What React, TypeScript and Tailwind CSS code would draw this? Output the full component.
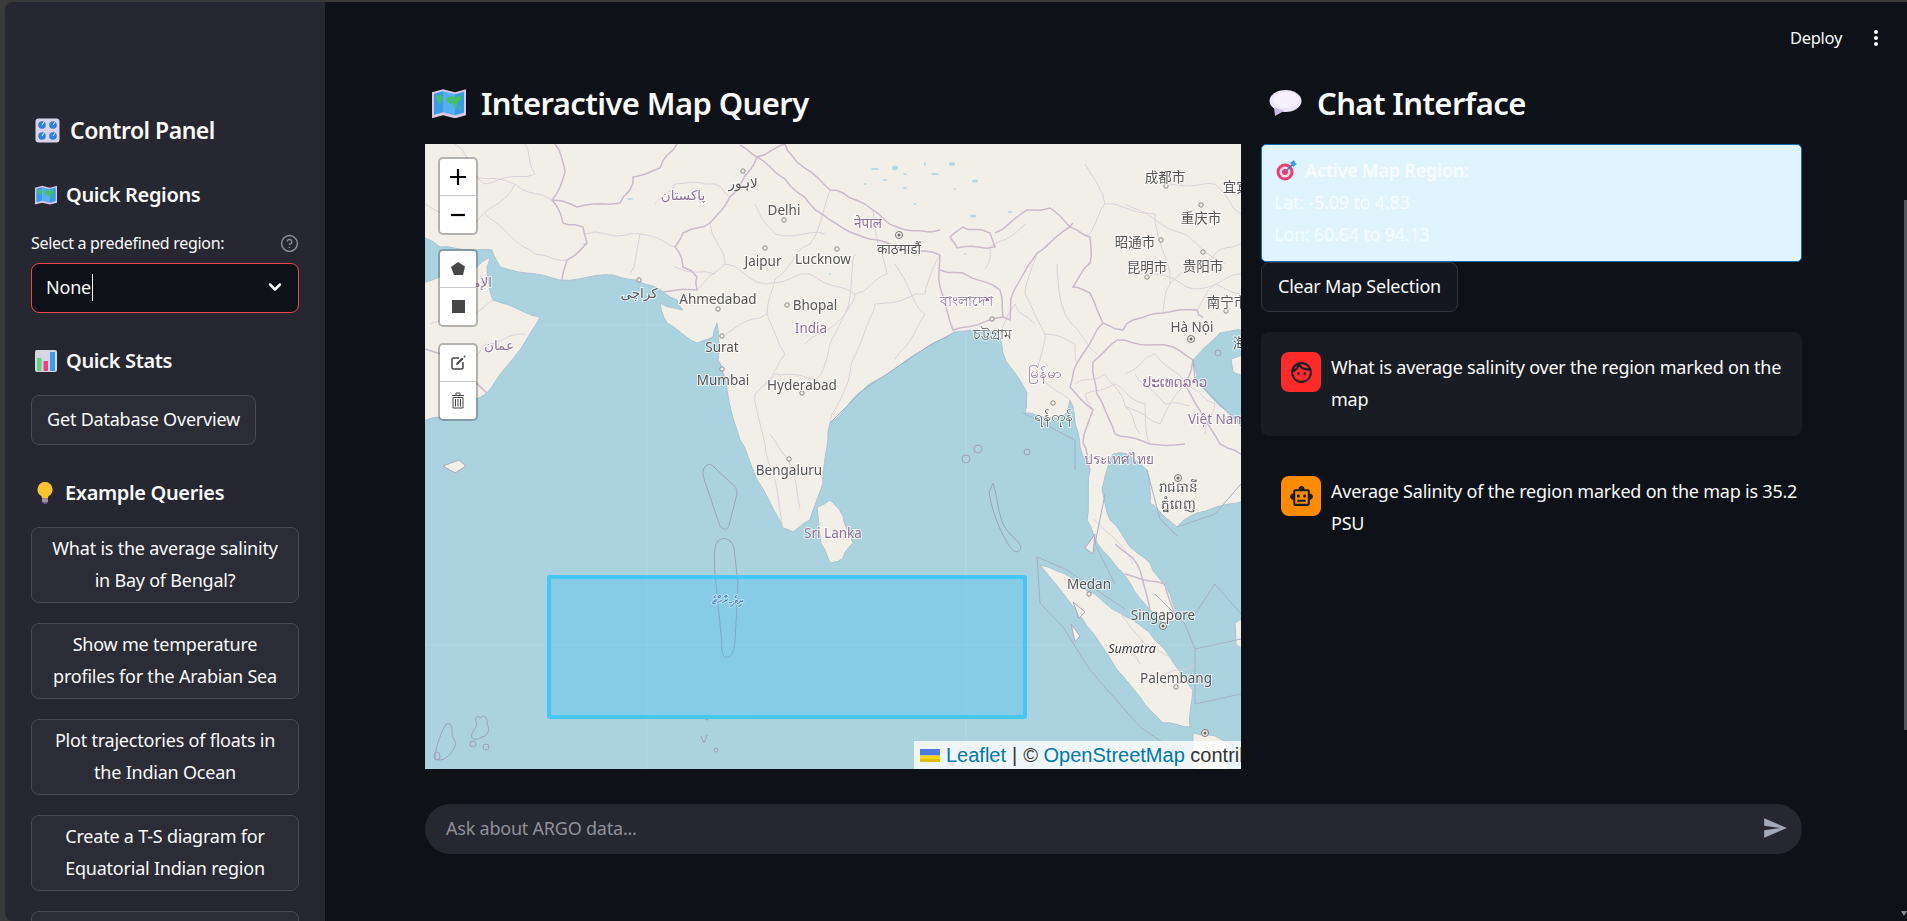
import React from 'react';
import { ChevronDown, CircleHelp } from 'lucide-react';
import { MdMoreVert, MdOutlineFace, MdOutlineSmartToy, MdSend } from 'react-icons/md';

const KnobsEmoji = () => (
  <svg width="25" height="25" viewBox="0 0 25 25">
    <rect x="0.5" y="0.5" width="24" height="24" rx="3" fill="#d9d3ea" />
    {[7, 18].map((cy) =>
      [7, 18].map((cx) => (
        <g key={`${cx}-${cy}`}>
          <circle cx={cx} cy={cy} r="3.800" fill="#2f80d6" />
          <path d={`M${cx} ${cy}l2-3`} stroke="#dff" strokeWidth="1" />
        </g>
      ))
    )}
  </svg>
);

const MapEmoji = ({ size }: { size: number }) => (
  <svg width={size} height={size * 0.9} viewBox="0 0 34 30">
    <path d="M0 4l11-3 12 3 11-3v26l-11 3-12-3-11 3z" fill="#d8c8e4" />
    <path d="M2 5.500l9-2.500v21l-9 2.500z" fill="#3b9ae8" />
    <path d="M11 3l12 3v21l-12-3z" fill="#55aef0" />
    <path d="M23 6l9-2.500v21l-9 2.500z" fill="#3b9ae8" />
    <path d="M4 8l5-2 2 4-3 6-3-4zM14 10l6-2 3 1 5-2 2 3-4 4-2 7-3-6-2 1-4-3zM26 18l3 1-1 3z" fill="#45bf68" />
  </svg>
);

const ChartEmoji = () => (
  <svg width="22" height="22" viewBox="0 0 22 22">
    <rect width="22" height="22" rx="2" fill="#d7d5e2" />
    <rect x="2" y="8" width="4.500" height="13" fill="#63d182" />
    <rect x="8.500" y="11" width="4.500" height="10" fill="#ef3f7f" />
    <rect x="15" y="2" width="5" height="19" fill="#3a9be8" />
  </svg>
);

const BulbEmoji = () => (
  <svg width="16" height="22" viewBox="0 0 16 22">
    <path d="M8 0a7.500 7.500 0 0 0-4 13.800c.8.700 1 1.700 1 2.700h6c0-1 .2-2 1-2.700A7.500 7.500 0 0 0 8 0z" fill="#fbc531" />
    <rect x="5" y="16.500" width="6" height="4" rx="1" fill="#9d90ad" />
    <rect x="6.500" y="20" width="3" height="2" rx="1" fill="#6f6480" />
  </svg>
);

const BubbleEmoji = () => (
  <svg width="33" height="26" viewBox="0 0 33 26">
    <ellipse cx="16.500" cy="11" rx="16" ry="11" fill="#ece4f8" />
    <path d="M5 17l1 9 9-5z" fill="#c9b8e2" />
    <ellipse cx="17" cy="10" rx="13" ry="8" fill="#f6f1fd" />
  </svg>
);

const TargetEmoji = () => (
  <svg width="21" height="21" viewBox="0 0 21 21">
    <circle cx="9" cy="12" r="8.500" fill="#e8406f" />
    <circle cx="9" cy="12" r="5.500" fill="#f3d7e2" />
    <circle cx="9" cy="12" r="3" fill="#e8406f" />
    <path d="M9 12l9-9" stroke="#2f80d6" strokeWidth="1.500" />
    <path d="M14 3l4-3 1 3 2 1-4 3z" fill="#3a9be8" />
  </svg>
);

// break long straight segments into small wobbles so coasts and borders look hand-surveyed
const roughen = (points: string, amp: number) => {
  const pts = points.split(' ').map((p) => p.split(',').map(Number));
  const out: string[] = [];
  pts.forEach(([x, y], i) => {
    out.push(`${x},${y}`);
    const next = pts[i + 1];
    if (!next) return;
    const len = Math.hypot(next[0] - x, next[1] - y);
    const steps = Math.ceil(len / 9);
    for (let s = 1; s < steps; s++) {
      const t = s / steps;
      const wob = Math.sin(s * 12.9898 + x * 0.78 + y * 0.37) * amp;
      const wob2 = Math.cos(s * 7.233 + y * 0.91 + x * 0.21) * amp;
      out.push(`${(x + (next[0] - x) * t + wob).toFixed(1)},${(y + (next[1] - y) * t + wob2).toFixed(1)}`);
    }
  });
  return out.join(' ');
};

const land = [
  '-5,-5 821,-5 821,186 795,189 768,216 772,239 795,262 821,286 821,356 772,369 752,383 725,359 722,326 702,310 688,310 682,326 677,346 685,376 705,403 725,419 745,450 752,476 738,479 725,466 705,439 692,423 672,399 662,376 665,326 655,303 650,279 645,256 638,273 618,273 600,269 602,249 578,209 572,186 530,188 502,203 438,246 405,279 403,296 398,339 385,376 368,388 358,384 332,336 315,296 297,226 293,216 292,179 288,193 272,199 242,179 235,159 258,166 252,156 238,148 212,136 188,131 135,136 75,123 67,106 15,103 -5,91',
  '-5,279 15,273 62,249 95,206 115,173 68,156 62,123 65,113 52,123 38,143 15,133 -5,139',
  '615,421 638,429 670,450 695,469 725,489 745,513 768,546 765,583 738,579 715,553 692,526 668,489 638,449',
  '392,363 405,356 418,372 428,399 418,414 405,419 396,400',
  '768,589 790,592 808,603 800,630 768,630',
  '810,479 821,475 821,509 811,500',
  '806,215 821,210 821,232 808,228',
];

const smallLand = [
  '18,322 34,316 41,322 30,329',
  '670,390 668,410 660,404',
  '648,458 660,468 654,474',
  '646,480 655,492 650,498',
];

const borders = [
  '130,0 140,28 127,56 138,79 158,83 162,99 142,116 137,136',
  '127,56 152,63 195,59 205,46 208,33 235,24 248,6 252,0',
  '315,1 332,13 325,26 305,53 285,79 258,89 250,103 258,123 272,133 272,146 238,148',
  '332,13 360,0',
  '405,46 418,49 448,66 472,83 505,88 515,86',
  '405,76 438,93 475,104 515,111',
  '360,0 372,18 405,46',
  '405,76 385,60 360,35 332,13',
  '525,93 538,83 565,89 570,103 532,104 525,93',
  '570,89 602,66 625,64 645,83 665,93 665,119 648,143 665,149 678,179 698,186 708,176 738,169 772,166 778,173',
  '515,111 515,143 528,186 578,173 575,146 538,129 515,126',
  '648,79 612,109 588,149 585,176 578,173',
  '678,179 652,219 645,243 668,266 658,299 665,326',
  '692,196 748,203 768,216 760,240 772,262 795,300 816,310',
  '692,196 668,218 672,250 690,290 725,300 760,300',
  '0,205 20,210 62,249',
  '700,430 740,440 752,476',
  '690,400 712,420 725,466',
];

const faint = [
  '405,46 385,100 350,135 342,170 300,190',
  '448,66 462,130 430,150 405,200 392,235',
  '515,111 500,150 450,160 425,230 405,279',
  '342,170 360,210 330,250 340,300 358,384',
  '392,235 350,230 330,250',
  '300,120 340,140 385,130 430,150',
  '272,146 300,120 285,79',
  '215,90 205,130',
  '160,90 215,90 250,103',
  '45,30 90,40 127,56',
  '60,70 110,110 142,116',
  '612,109 600,150 620,190 610,230 645,256',
  '632,120 640,170 672,210',
  '700,230 730,210 760,240 735,280 700,262',
  '725,300 720,260 690,240',
  '745,513 720,500 695,469',
  '600,80 565,103 560,125',
  '700,60 760,90 800,120',
  '730,130 770,145 816,130',
  '345,290 365,320 375,365',
  '668,375 690,395 708,420',
  '660,20 680,60 660,93',
  '680,60 730,70 745,140 738,169',
  '745,40 790,40 816,70',
  '745,140 790,110 816,100',
  '772,166 790,140 816,150',
  '430,110 420,170 380,200',
  '470,120 500,170 470,215',
  '330,60 350,90 400,90',
  '290,130 250,123',
  '575,190 590,160 610,180',
  '620,190 650,200 652,219',
  '650,240 680,230 700,262 715,290',
  '690,240 660,250 668,266',
  '710,230 740,260 765,262',
  '760,240 790,260 780,290',
  '100,0 110,30 60,40 30,0',
  '0,60 50,80 90,40',
  '5,180 50,170 68,156',
  '30,240 60,200 100,190',
  '230,60 250,40 290,40 305,53',
  '715,520 700,500',
  '740,530 770,520',
];

const maritime = [
  '598,269 650,296 650,326',
  '405,279 438,246 502,203 530,188',
  '612,413 615,459 638,483 665,526 715,583 740,600',
  '612,413 640,425 700,465',
  '680,350 670,400 690,440',
  '768,216 770,235 816,282',
  '752,383 790,370 816,340',
  '722,326 735,375 752,392',
  '770,470 790,440 816,470',
  '770,505 816,495',
  '730,450 760,480 770,505 770,560 816,550',
];

const islands = [
  'M282 321C276 325 278 332 280 338L295 382C299 387 303 386 304 381L312 350C312 344 310 342 306 339L289 323C286 320 284 320 282 321Z',
  'M292 398C298 392 306 394 309 404L313 440L310 498C309 510 304 515 300 513C296 511 297 500 296 490L290 430C289 415 289 404 292 398Z',
  'M568 339C572 350 572 365 578 380C584 392 594 395 596 404C592 412 586 406 582 398C572 382 566 362 564 348Z',
  'M10 614C10 606 15 590 20 582C24 576 28 582 27 590C28 598 34 596 28 606C22 616 14 618 10 614Z',
  'M47 594C45 590 50 586 52 580C49 574 52 570 55 574C60 570 63 574 62 580C66 586 62 592 57 593C52 596 49 596 47 594Z',
];

type Label = [string, number, number];

const cityLabels: Label[] = [
  ['لاہور', 318, 39],
  ['Delhi', 359, 66],
  ['Jaipur', 338, 117],
  ['Lucknow', 398, 115],
  ['Ahmedabad', 293, 155],
  ['Bhopal', 390, 161],
  ['Surat', 297, 203],
  ['Mumbai', 298, 236],
  ['Hyderabad', 377, 241],
  ['کراچی', 214, 149],
  ['Bengaluru', 364, 326],
  ['成都市', 740, 33],
  ['宜宾市', 818, 43],
  ['重庆市', 776, 74],
  ['昭通市', 710, 98],
  ['昆明市', 722, 123],
  ['贵阳市', 778, 122],
  ['南宁市', 802, 158],
  ['Hà Nội', 767, 183],
  ['海口市', 828, 199],
  ['काठमाडौं', 474, 105],
  ['চট্টগ্রাম', 567, 190],
  ['ရန်ကုန်', 628, 272],
  ['រាជធានី', 753, 343],
  ['ភ្នំពេញ', 753, 360],
  ['Medan', 664, 440],
  ['Singapore', 738, 471],
  ['Palembang', 751, 534],
];

const countryLabels: Label[] = [
  ['پاکستان', 258, 51],
  ['India', 386, 184],
  ['عمان', 74, 201],
  ['الإمارات', 44, 138],
  ['Sri Lanka', 408, 389],
  ['नेपाल', 443, 79],
  ['বাংলাদেশ', 541, 157],
  ['မြန်မာ', 620, 229],
  ['ປະເທດລາວ', 750, 238],
  ['Việt Nam', 792, 275],
  ['ประเทศไทย', 694, 315],
];

const dots = [
  [318, 27], [359, 76], [340, 104], [412, 105], [293, 165], [362, 161], [297, 192], [297, 225], [377, 249],
  [214, 136], [364, 315], [741, 42], [776, 61], [736, 96], [722, 133], [778, 108], [801, 167], [567, 175],
  [628, 259], [664, 450], [751, 543],
];

const bigDots = [[766, 195], [474, 91], [753, 334], [738, 482], [780, 589]];

const lakes = [
  [450, 25, 4, 1], [470, 24, 3, 2.500], [480, 30, 2, 1], [510, 30, 4, 1], [527, 20, 3, 2], [550, 37, 3, 1.500], [490, 60, 1.500, 1],
  [548, 72, 3, 1.500], [440, 40, 1.500, 1], [480, 44, 2, 1], [205, 55, 3, 1], [160, 100, 2, 1], [585, 68, 2, 1], [460, 36, 2, 1],
  [500, 20, 1, 2], [530, 45, 1, 1], [405, 130, 1, 1], [540, 110, 1, 1],
];

const MapTiles = () => (
  <svg width="816" height="625" viewBox="0 0 816 625" className="block blur-[0.6px]">
    <rect width="816" height="625" fill="#aad3df" />
    {land.map((points) => (
      <polygon key={points} points={roughen(points, 1.2)} fill="#f2efe9" stroke="#a9c3d2" strokeWidth="1" />
    ))}
    {smallLand.map((points) => (
      <polygon key={points} points={points} fill="#f2efe9" stroke="#a9a8c0" strokeWidth="1" />
    ))}
    {lakes.map(([cx, cy, rx, ry]) => (
      <ellipse key={`${cx}-${cy}`} cx={cx} cy={cy} rx={rx} ry={ry} fill="#b4d9e4" />
    ))}
    {faint.map((points) => (
      <polyline key={points} points={roughen(points, 2)} fill="none" stroke="#dcd1da" strokeWidth="1" />
    ))}
    {borders.map((points) => (
      <polyline key={points} points={roughen(points, 1.5)} fill="none" stroke="#cbb9cc" strokeWidth="1.500" />
    ))}
    {maritime.map((points) => (
      <polyline key={points} points={points} fill="none" stroke="#a5b0c4" strokeWidth="1" />
    ))}
    {islands.map((d) => (
      <path key={d} d={d} fill="none" stroke="#9aa2ba" strokeWidth="1" />
    ))}
    <g fill="none" stroke="#a39fb8" strokeWidth="1">
      <ellipse cx="12" cy="612" rx="3" ry="4" />
      <circle cx="48" cy="600" r="3" />
      <circle cx="61" cy="603" r="3" />
      <circle cx="282" cy="574" r="2" />
      <circle cx="291" cy="606" r="2" />
      <path d="M276 592l3 7 3-8" />
      <circle cx="553" cy="305" r="4" />
      <circle cx="541" cy="315" r="4" />
      <circle cx="602" cy="308" r="3" />
      <circle cx="793" cy="209" r="3" />
    </g>
    <g stroke="#ffffff" strokeOpacity="0.12">
      <path d="M222 0V625M541 0V625M0 181H816M0 501H816" />
    </g>
    {dots.map(([cx, cy]) => (
      <circle key={`${cx}-${cy}`} cx={cx} cy={cy} r="2.200" fill="#f2efe9" stroke="#8a8a8a" />
    ))}
    {bigDots.map(([cx, cy]) => (
      <g key={`${cx}-${cy}`}>
        <circle cx={cx} cy={cy} r="3.500" fill="#f2efe9" stroke="#777" />
        <circle cx={cx} cy={cy} r="1.500" fill="#666" />
      </g>
    ))}
    <g fontFamily="'Noto Sans','Noto Sans CJK SC','DejaVu Sans',sans-serif" fontSize="13.500" textAnchor="middle" stroke="#ffffff" strokeOpacity="0.7" strokeWidth="2" style={{ paintOrder: 'stroke' }}>
      {cityLabels.map(([text, x, y]) => (
        <text key={text} x={x} y={y + 5} fill="#555">
          {text}
        </text>
      ))}
      {countryLabels.map(([text, x, y]) => (
        <text key={text} x={x} y={y + 5} fill="#8f7396">
          {text}
        </text>
      ))}
      <text x={707} y={509} fill="#333" fontStyle="italic" fontSize="12.500">
        Sumatra
      </text>
      <text x={302} y={460} fill="#5c5a8c" fontSize="11">
        ދިވެހިރާއްޖެ
      </text>
    </g>
    <rect x="124" y="433" width="476" height="140" rx="1" fill="#38bdf8" fillOpacity="0.3" stroke="#45c6f3" strokeWidth="4" />
  </svg>
);

const mapBtn = 'flex h-[37px] w-full items-center justify-center text-black';

const MapControls = () => (
  <div className="absolute left-[13px] top-[13px] flex w-10 flex-col">
    <div className="rounded-[5px] border-2 border-black/25 bg-white bg-clip-padding">
      <div className={`${mapBtn} border-b border-[#ccc]`}>
        <svg width="18" height="18" viewBox="0 0 18 18"><path d="M9 1v16M1 9h16" stroke="#000" strokeWidth="2.200" /></svg>
      </div>
      <div className={mapBtn}>
        <svg width="18" height="18" viewBox="0 0 18 18"><path d="M2 9h14" stroke="#000" strokeWidth="2.200" /></svg>
      </div>
    </div>
    <div className="mt-[14px] rounded-[5px] border-2 border-black/25 bg-white bg-clip-padding">
      <div className={`${mapBtn} border-b border-[#ccc]`}>
        <svg width="16" height="16" viewBox="0 0 16 16"><path d="M8 1l7 4.500-2 8.500H4L1 6z" fill="#464646" /></svg>
      </div>
      <div className={mapBtn}>
        <div className="h-[13px] w-[13px] bg-[#464646]" />
      </div>
    </div>
    <div className="mt-4 rounded-[5px] border-2 border-black/25 bg-white bg-clip-padding">
      <div className={`${mapBtn} border-b border-[#ccc]`}>
        <svg width="16" height="16" viewBox="0 0 16 16" fill="none">
          <path d="M9 3H3.500A1.500 1.500 0 0 0 2 4.500v8A1.500 1.500 0 0 0 3.500 14h8a1.500 1.500 0 0 0 1.500-1.500V7" stroke="#464646" strokeWidth="1.500" />
          <path d="M6 10l.5-2L12 2.500 13.500 4 8 9.500z" fill="#464646" />
          <circle cx="14.500" cy="1.500" r="1" fill="#464646" />
        </svg>
      </div>
      <div className={mapBtn}>
        <svg width="14" height="17" viewBox="0 0 14 17" fill="none" stroke="#444" strokeWidth="1">
          <path d="M1 3.500h12M5 3V1h4v2M2 5.500h10V16H2zM4.500 7v7.500M7 7v7.500M9.500 7v7.500" />
        </svg>
      </div>
    </div>
  </div>
);

const Attribution = () => (
  <div className="absolute bottom-0 left-[489px] flex h-7 items-center whitespace-nowrap bg-white/80 pl-[6px] font-['Liberation_Sans',sans-serif] text-[20px] text-[#333]">
    <svg width="20" height="13" viewBox="0 0 20 13" className="mr-[6px]">
      <rect width="20" height="6.500" fill="#4c7be1" />
      <rect y="6.500" width="20" height="3.500" fill="#ffd500" />
      <rect y="10" width="20" height="3" fill="#e0bc00" />
    </svg>
    <span className="text-[#0078a8]">Leaflet</span>
    <span className="mx-[6px]">|</span>
    <span>©&nbsp;</span>
    <span className="text-[#0078a8]">OpenStreetMap</span>
    <span>&nbsp;contributors</span>
  </div>
);

const exampleQueries: [string, string][] = [
  ['What is the average salinity', 'in Bay of Bengal?'],
  ['Show me temperature', 'profiles for the Arabian Sea'],
  ['Plot trajectories of floats in', 'the Indian Ocean'],
  ['Create a T-S diagram for', 'Equatorial Indian region'],
];

const Sidebar = () => (
  <aside className="flex h-full w-[320px] shrink-0 flex-col overflow-hidden rounded-l-lg bg-[#262730] px-[26px] pt-[110px] text-[#fafafa]">
    <div className="flex h-9 shrink-0 items-center pl-1 text-[23px] font-semibold tracking-[-0.5px]">
      <KnobsEmoji />
      <span className="ml-[10px]">Control Panel</span>
    </div>
    <div className="mt-8 flex h-[30px] shrink-0 items-center pl-1 text-[20px] font-semibold tracking-[-0.35px]">
      <MapEmoji size={22} />
      <span className="ml-[9px]">Quick Regions</span>
    </div>
    <div className="mt-[22px] flex h-[22px] shrink-0 items-center justify-between text-[16px] tracking-[-0.3px]">
      <span>Select a predefined region:</span>
      <CircleHelp size={19} strokeWidth={1.8} className="text-[#8d8e95]" />
    </div>
    <div className="mt-[9px] flex h-[50px] shrink-0 items-center justify-between rounded-lg border border-[#e5484d] bg-[#0e1117] pb-[2px] pl-[14px] pr-[13px] text-[18px] tracking-[-0.22px]">
      <span className="flex items-center">
        None
        <span className="ml-px h-[27px] w-px bg-white" />
      </span>
      <ChevronDown size={20} strokeWidth={3} />
    </div>
    <div className="mt-[33px] flex h-[30px] shrink-0 items-center pl-1 text-[20px] font-semibold tracking-[-0.35px]">
      <ChartEmoji />
      <span className="ml-[9px]">Quick Stats</span>
    </div>
    <button className="mt-[19px] h-[50px] w-[225px] shrink-0 rounded-lg border border-[#4a4b55] bg-[#2b2c36] pb-[2px] text-[18px] tracking-[-0.22px]">
      Get Database Overview
    </button>
    <div className="mt-[33px] flex h-[30px] shrink-0 items-center pl-[6px] text-[20px] font-semibold tracking-[-0.35px]">
      <BulbEmoji />
      <span className="ml-[12px]">Example Queries</span>
    </div>
    <div className="mt-[19px] flex shrink-0 flex-col gap-5">
      {exampleQueries.map(([first, second]) => (
        <button key={first} className="h-[76px] rounded-lg border border-[#4a4b55] bg-[#2b2c36] pb-[2px] text-[18px] leading-8 tracking-[-0.22px]">
          {first}
          <br />
          {second}
        </button>
      ))}
      <button className="h-[76px] shrink-0 rounded-lg border border-[#4a4b55] bg-[#2b2c36]" />
    </div>
  </aside>
);

const ChatPanel = () => (
  <section className="w-[541px] shrink-0 text-[#fafafa]">
    <div className="flex h-10 items-center pl-2 text-[31px] font-semibold tracking-[-0.6px]">
      <BubbleEmoji />
      <span className="ml-[15px]">Chat Interface</span>
    </div>
    <div className="mt-[21px] h-[118px] rounded-[5px] border border-[#0e6fb8] bg-[#e0f4ff] px-3 pt-[9px] text-[18px] leading-8 tracking-[-0.22px] text-[#f7fcff]">
      <div className="flex h-8 items-center pl-[2px] font-semibold">
        <TargetEmoji />
        <span className="ml-2">Active Map Region:</span>
      </div>
      <div>Lat: -5.09 to 4.83</div>
      <div>Lon: 60.64 to 94.13</div>
    </div>
    <button className="h-[50px] w-[197px] rounded-lg border border-[#33353e] bg-[#14171f] pb-[2px] text-[18px] tracking-[-0.22px]">
      Clear Map Selection
    </button>
    <div className="mt-5 flex h-[104px] gap-[10px] rounded-lg bg-[#1a1c24] px-5 pt-5 text-[18px] leading-8 tracking-[-0.22px]">
      <div className="flex h-10 w-10 shrink-0 items-center justify-center rounded-lg bg-[#ff2b2b] text-[#1a1c24]">
        <MdOutlineFace size={25} />
      </div>
      <p className="-mt-[1px]">What is average salinity over the region marked on the map</p>
    </div>
    <div className="mt-5 flex gap-[10px] px-5 pt-5 text-[18px] leading-8 tracking-[-0.22px]">
      <div className="flex h-10 w-10 shrink-0 items-center justify-center rounded-lg bg-[#ff8c00] text-[#1a1c24]">
        <MdOutlineSmartToy size={25} />
      </div>
      <p className="-mt-[1px] -mr-5">Average Salinity of the region marked on the map is 35.2 PSU</p>
    </div>
  </section>
);

const App = () => (
  <div className="relative flex h-screen w-screen overflow-hidden bg-[#3a3a3a] pl-[5px] pt-[2px] font-['Noto_Sans','Noto_Sans_CJK_SC',sans-serif]">
    <Sidebar />
    <main className="flex min-w-0 flex-1 flex-col bg-[#0e1117] pl-[100px] pt-[81px]">
      <div className="flex gap-5">
        <section className="w-[816px] shrink-0 text-[#fafafa]">
          <div className="flex h-10 items-center pl-[7px] text-[31px] font-semibold tracking-[-0.6px]">
            <MapEmoji size={34} />
            <span className="ml-[15px]">Interactive Map Query</span>
          </div>
          <div className="relative mt-[21px] h-[625px] w-[816px] overflow-hidden">
            <MapTiles />
            <MapControls />
            <Attribution />
          </div>
        </section>
        <ChatPanel />
      </div>
      <div className="mt-[35px] flex h-[50px] w-[1377px] shrink-0 items-center justify-between rounded-full bg-[#262730] pb-[2px] pl-[21px] pr-[14px] text-[18px] tracking-[-0.22px] text-[#8f9098]">
        <span>Ask about ARGO data...</span>
        <MdSend size={26} className="text-[#a3a8b8]" />
      </div>
    </main>
    <div className="absolute right-[19px] top-[26px] flex items-center gap-[22px] text-[16.500px] tracking-[-0.3px] text-[#fafafa]">
      <span>Deploy</span>
      <MdMoreVert size={24} />
    </div>
    <div className="absolute right-0 top-[200px] h-[530px] w-[3px] bg-[#55565c]" />
    <div className="absolute bottom-[5px] right-0 h-0 w-0 border-x-[3px] border-t-[5px] border-x-transparent border-t-[#8a8a8a]" />
  </div>
);

export default App;
